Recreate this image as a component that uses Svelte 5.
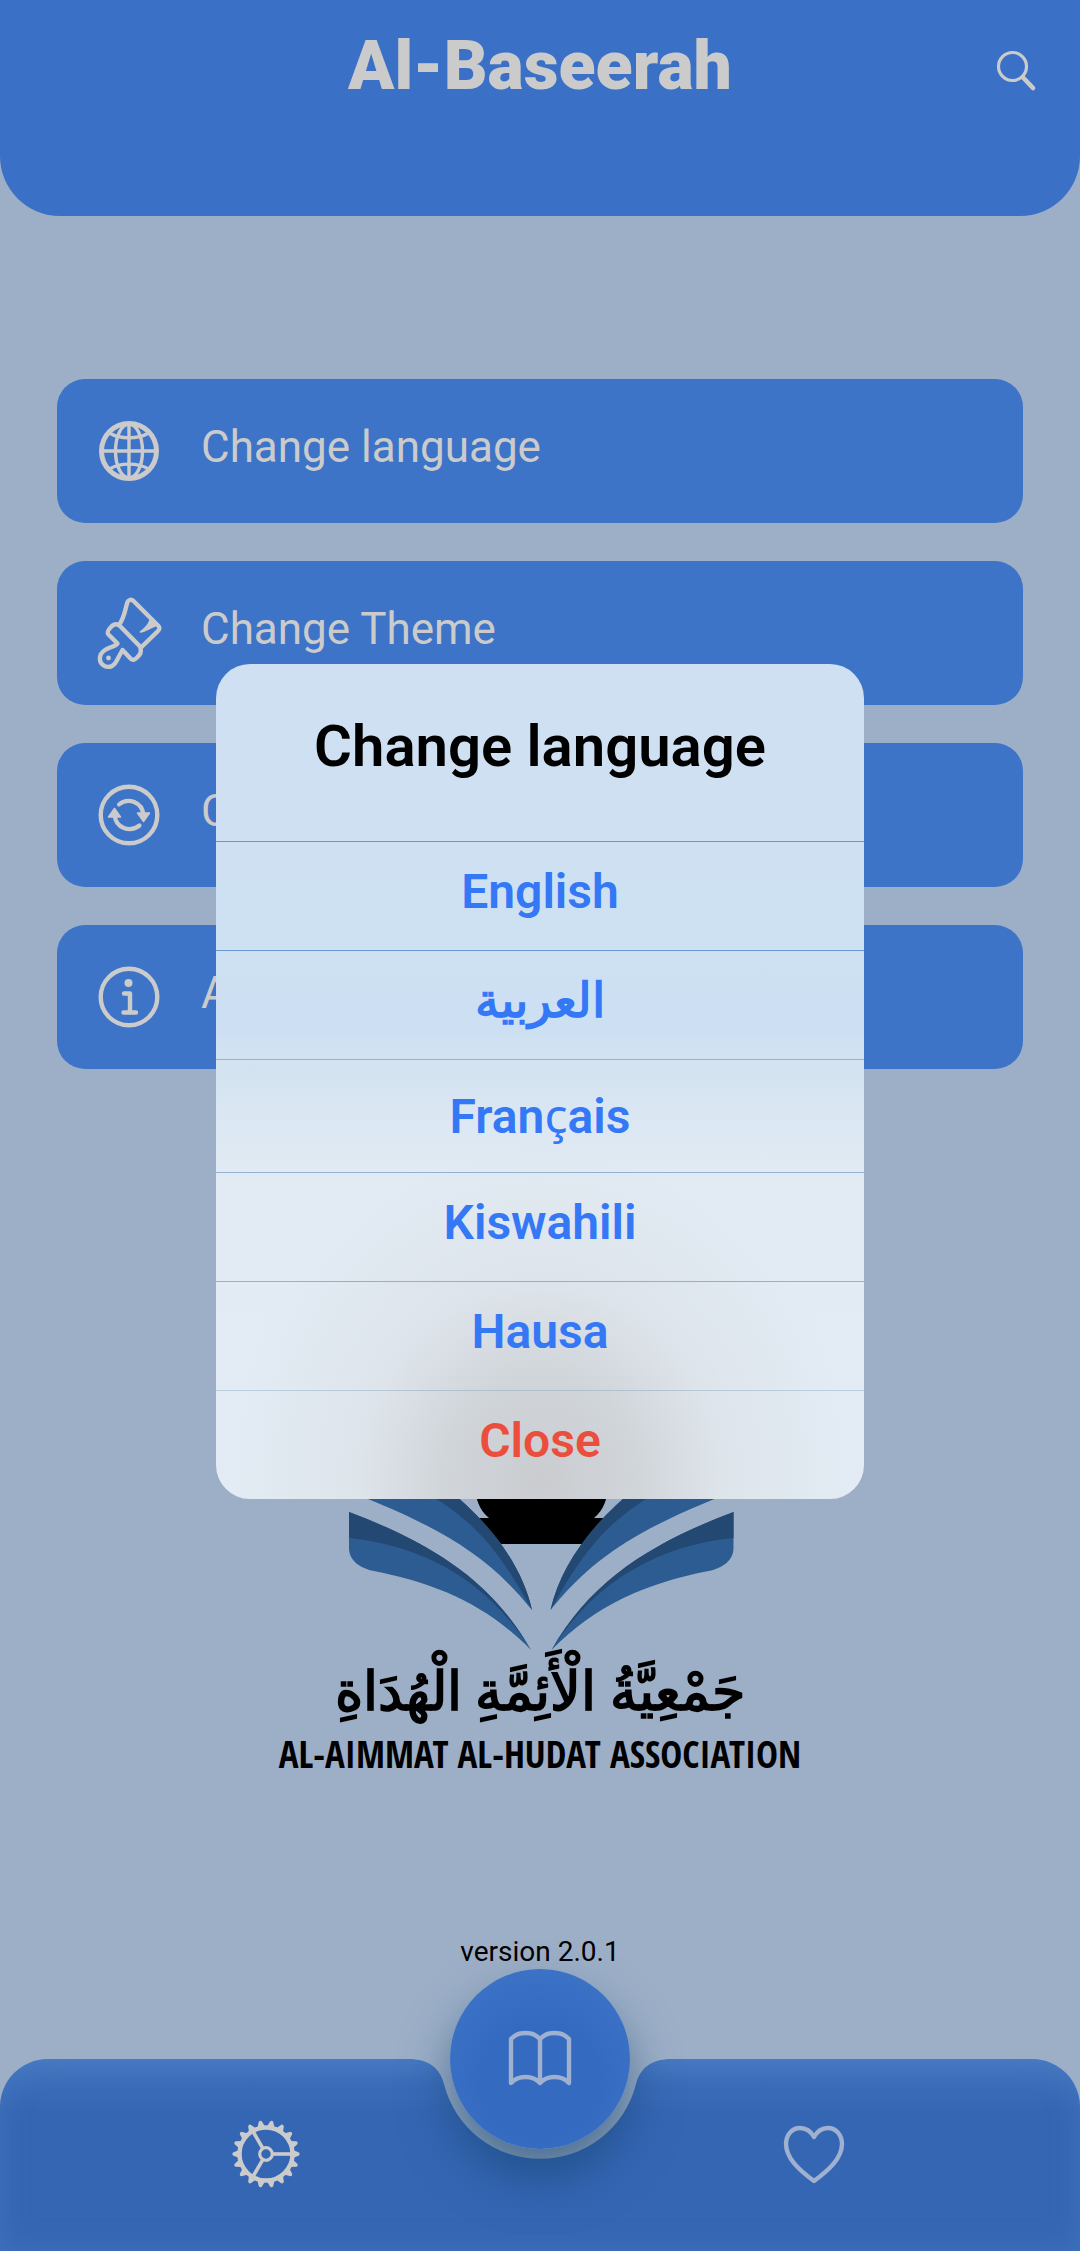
<script>
  const menu = [
    { icon: 'globe', label: 'Change language' },
    { icon: 'brush', label: 'Change Theme' },
    { icon: 'sync', label: 'Check for updates' },
    { icon: 'info', label: 'About us' }
  ];

  const languages = [
    { code: 'en', name: 'English' },
    { code: 'ar', name: 'العربية' },
    { code: 'fr', name: 'Français' },
    { code: 'sw', name: 'Kiswahili' },
    { code: 'ha', name: 'Hausa' }
  ];

  const teeth = Array.from({ length: 18 }, (_, i) => i * 20);

  let open = $state(true);
</script>

<div class="app">
  <header>
    <h1>Al-Baseerah</h1>
    <button class="icon-button search" aria-label="Search">
      <svg width="44" height="44" viewBox="0 0 44 44" fill="none" stroke="currentColor">
        <circle cx="18.500" cy="18.500" r="14" stroke-width="3.200" />
        <path d="M29 29.500L39 40" stroke-width="4.600" stroke-linecap="round" />
      </svg>
    </button>
  </header>

  <ul class="menu">
    {#each menu as item}
      <li>
        <button class="card" onclick={() => (open = item.icon === 'globe')}>
          <svg width="68" height="72" viewBox="0 0 68 72" fill="none" stroke="currentColor" stroke-width="4.400" stroke-linecap="round" stroke-linejoin="round">
            {#if item.icon === 'globe'}
              <circle cx="34" cy="36" r="27.500" stroke-width="5" />
              <ellipse cx="34" cy="36" rx="13.500" ry="27" stroke-width="3.400" />
              <path d="M34 9V63M7 36H61" stroke-width="3.400" />
              <path d="M14.500 18C25 24.500 43 24.500 53.500 18M14.500 54C25 47.500 43 47.500 53.500 54" stroke-width="3.400" />
            {:else if item.icon === 'brush'}
              <path d="M24 28C30 20 30 12 32.500 5C33.500 2.500 36.500 2 38.500 4L63 28.500C65 30.500 65 32 63 34L46 50.500Z" />
              <path d="M55.500 22C54 28 51 31 45.500 35C51 34 54 31 60 29Z" fill="currentColor" stroke-width="1.600" />
              <path d="M24 28C21 26.500 18 27.500 16 30C13 33 11.500 35 13.500 37.500L22.500 46.500C21 49 14 50.500 10 53C3 57.500 3.500 66 9.500 69C15 71.500 20 68 21.500 64L27.500 53L35.500 61.500C38 64 40.500 62.500 42.500 60C45 58 46.500 55 45.500 51" />
              <circle cx="13.500" cy="61" r="2.400" fill="currentColor" stroke="none" />
            {:else if item.icon === 'sync'}
              <circle cx="34" cy="36" r="28.300" />
              <path d="M24 25.500C33 18 47.500 23 48.300 36M44.500 46.500C35 54 20.500 49 19.700 36" stroke-width="4.200" />
              <path d="M42.500 34H54.500L48.500 42.500ZM13.500 38H25.500L19.500 29.500Z" fill="currentColor" stroke-width="1.500" />
            {:else}
              <circle cx="34" cy="36" r="28.300" />
              <circle cx="33.500" cy="22" r="4" fill="currentColor" stroke="none" />
              <path d="M29 32.500H35V51M28.500 51.500H41" />
            {/if}
          </svg>
          <span>{item.label}</span>
        </button>
      </li>
    {/each}
  </ul>

  <figure>
    <svg class="emblem" width="560" height="176" viewBox="0 0 560 176" aria-hidden="true">
      <path d="M214 0C215 18 219 30 229 38H218L241 64H322L345 38H334C344 30 348 18 349 0Z" fill="#000" />
      {#each ['', 'translate(562.500 0) scale(-1 1)'] as flip}
        <g transform={flip}>
          <path d="M186 5L200 21V10Z" fill="#000" />
          <path d="M60 0C170 42 222 68 272 130C262 86 232 44 183 5Z" fill="#2c5c92" />
          <path d="M150 5C212 34 240 72 272 130C262 86 232 44 183 5Z" fill="#234872" />
          <path d="M89 32C168 62 230 98 271 170C226 124 175 103 114 91C99 88 89 80 89 68Z" fill="#2c5c92" />
          <path d="M89 32C168 62 230 98 271 170C226 98 160 65 89 58Z" fill="#234872" />
        </g>
      {/each}
    </svg>
    <figcaption>
      <span class="arabic" lang="ar" dir="rtl">جَمْعِيَّةُ الْأَئِمَّةِ الْهُدَاةِ</span>
      <span class="latin">AL-AIMMAT AL-HUDAT ASSOCIATION</span>
    </figcaption>
  </figure>

  <p class="version">version 2.0.1</p>

  <nav>
    <svg class="notch" width="264" height="100" viewBox="0 0 264 100" aria-hidden="true">
      <path d="M0 0C22 0 32 10 36 25A99 99 0 0 0 228 25C232 10 242 0 264 0Z" />
    </svg>
    <button class="icon-button" aria-label="Settings">
      <svg width="70" height="70" viewBox="-35 -35 70 70" fill="none" stroke="currentColor">
        <circle r="26.500" stroke-width="4.400" />
        <circle r="6.300" stroke-width="3.200" />
        {#each [0, 120, 240] as a}
          <path d="M7 0H26" stroke-width="3.600" transform="rotate({a})" />
        {/each}
        {#each teeth as a}
          <path d="M27 -4L33 -1.500Q34.500 0 33 1.500L27 4Z" fill="currentColor" stroke="none" transform="rotate({a})" />
        {/each}
      </svg>
    </button>
    <button class="fab" aria-label="Library">
      <svg width="66" height="58" viewBox="0 0 66 58" fill="none" stroke="currentColor" stroke-width="4.400" stroke-linejoin="round">
        <path d="M33 9C26 1 11 1 4 9V53C11 45 26 45 33 53C40 45 55 45 62 53V9C55 1 40 1 33 9ZM33 9V53" />
      </svg>
    </button>
    <button class="icon-button" aria-label="Favourites">
      <svg width="64" height="60" viewBox="0 0 64 60" fill="none" stroke="#9fb1ce" stroke-width="4.400" stroke-linejoin="round">
        <path d="M32 13C27 4 21 4 18 4C10 4 4 11 4 20C4 34 17 46 32 57C47 46 60 34 60 20C60 11 54 4 46 4C43 4 37 4 32 13Z" />
      </svg>
    </button>
  </nav>

  {#if open}
    <div class="overlay">
      <div class="dialog" role="dialog" aria-modal="true" aria-labelledby="dialog-title">
        <h2 id="dialog-title">Change language</h2>
        {#each languages as l}
          <button class="option" class:tall={l.code === 'fr'} lang={l.code}>
            {#if l.code === 'fr'}<span>Fran<span class="light">ç</span>ais</span>{:else}{l.name}{/if}
          </button>
        {/each}
        <button class="option close" onclick={() => (open = false)}>Close</button>
      </div>
    </div>
  {/if}
</div>

<style>
  :global(body) {
    margin: 0;
    background: #9dafc7;
  }

  .app {
    position: relative;
    display: flex;
    flex-direction: column;
    min-height: 100vh;
    overflow: hidden;
    background: #9dafc7;
    color: #cbcbcb;
    font-family: Roboto, sans-serif;
  }

  button {
    border: 0;
    padding: 0;
    background: none;
    color: inherit;
    font: inherit;
    cursor: pointer;
  }

  svg {
    display: block;
    flex: none;
    overflow: visible;
  }

  header {
    display: grid;
    grid-template-columns: 1fr auto 1fr;
    align-items: start;
    box-sizing: border-box;
    height: 216px;
    padding: 24px 42px 0;
    border-radius: 0 0 60px 60px;
    background: #3a70c5;
  }

  h1 {
    grid-column: 2;
    margin: 0;
    font-size: 68px;
    font-weight: 900;
    line-height: 84px;
  }

  .search {
    justify-self: end;
    margin-top: 24px;
  }

  .menu {
    display: flex;
    flex-direction: column;
    gap: 38px;
    margin: 163px 57px 0;
    padding: 0;
    list-style: none;
  }

  .card {
    display: flex;
    align-items: center;
    gap: 38px;
    box-sizing: border-box;
    width: 100%;
    height: 144px;
    padding: 0 38px;
    border-radius: 28px;
    background: #3d74c8;
    font-size: 44px;
    font-weight: 400;
    line-height: 54px;
    text-align: left;
  }

  .card span {
    padding-bottom: 8px;
  }

  figure {
    display: flex;
    flex-direction: column;
    align-items: center;
    margin: 411px 0 0;
    color: #000;
  }

  figcaption {
    display: flex;
    flex-direction: column;
    align-items: center;
    white-space: nowrap;
  }

  .arabic {
    font-family: Roboto, serif;
    font-size: 54px;
    font-weight: 600;
    line-height: 72px;
    padding-bottom: 8px;
  }

  .latin {
    font-family: 'Open Sans Condensed', 'Roboto Condensed', sans-serif;
    font-size: 37px;
    font-weight: 700;
    line-height: 36px;
  }

  .version {
    margin: auto 0 0;
    padding-bottom: 91px;
    color: #000;
    font-size: 28px;
    line-height: 32px;
    text-align: center;
  }

  nav {
    position: relative;
    display: grid;
    grid-template-columns: repeat(3, 1fr);
    justify-items: center;
    box-sizing: border-box;
    height: 192px;
    padding: 0 12%;
    border-radius: 48px 48px 0 0;
    background: linear-gradient(#4678c0, #3c6dba 24px, #3566b4 54px);
    box-shadow: inset 0 0 28px rgba(74, 125, 198, 0.5);
  }

  nav .icon-button {
    height: 70px;
    margin-top: 60px;
  }

  .notch {
    position: absolute;
    top: 0;
    left: 50%;
    transform: translateX(-50%);
    fill: #9dafc7;
  }

  .fab {
    position: relative;
    display: grid;
    place-items: center;
    width: 180px;
    height: 180px;
    margin-top: -90px;
    border-radius: 50%;
    background: radial-gradient(circle at 50% 62%, #346ac0 40%, #3b72c6 76%);
    box-shadow: 0 28px 50px rgba(20, 66, 110, 0.6);
    color: #9fb1ce;
  }

  .overlay {
    position: absolute;
    inset: 0;
    display: flex;
    justify-content: center;
    align-items: flex-start;
    padding-top: 664px;
  }

  .dialog {
    display: flex;
    flex-direction: column;
    width: 60%;
    overflow: hidden;
    border-radius: 34px;
    background:
      radial-gradient(ellipse 310px 340px at 50% 98%, #cacccf, rgba(204, 208, 212, 0.8) 32%, rgba(216, 220, 224, 0.5) 58%, rgba(227, 235, 244, 0) 100%),
      linear-gradient(#cfe0f2, #cde0f3 44%, #d2e2f1 47%, #e2ebf4 61%, #e3ecf4);
    color: #3478f6;
    text-align: center;
  }

  h2 {
    margin: 0;
    padding: 46px 0 59px;
    color: #000;
    font-size: 58px;
    font-weight: 600;
    line-height: 72px;
  }

  .option {
    box-sizing: border-box;
    height: 109px;
    padding-bottom: 8px;
    border-top: 1px solid #6899cf;
    font-size: 48px;
    font-weight: 600;
    line-height: 56px;
  }

  .option:lang(ar) {
    font-family: Roboto, serif;
  }

  .tall {
    height: 113px;
    padding-bottom: 0;
    border-color: #8fb3d8;
  }

  .tall ~ .option {
    border-color: rgba(70, 120, 175, 0.5);
  }

  .option.close {
    border-color: rgba(70, 120, 155, 0.25);
    color: #eb4e3d;
  }

  .light {
    font-family: 'Noto Sans', sans-serif;
    font-weight: 400;
  }
</style>
